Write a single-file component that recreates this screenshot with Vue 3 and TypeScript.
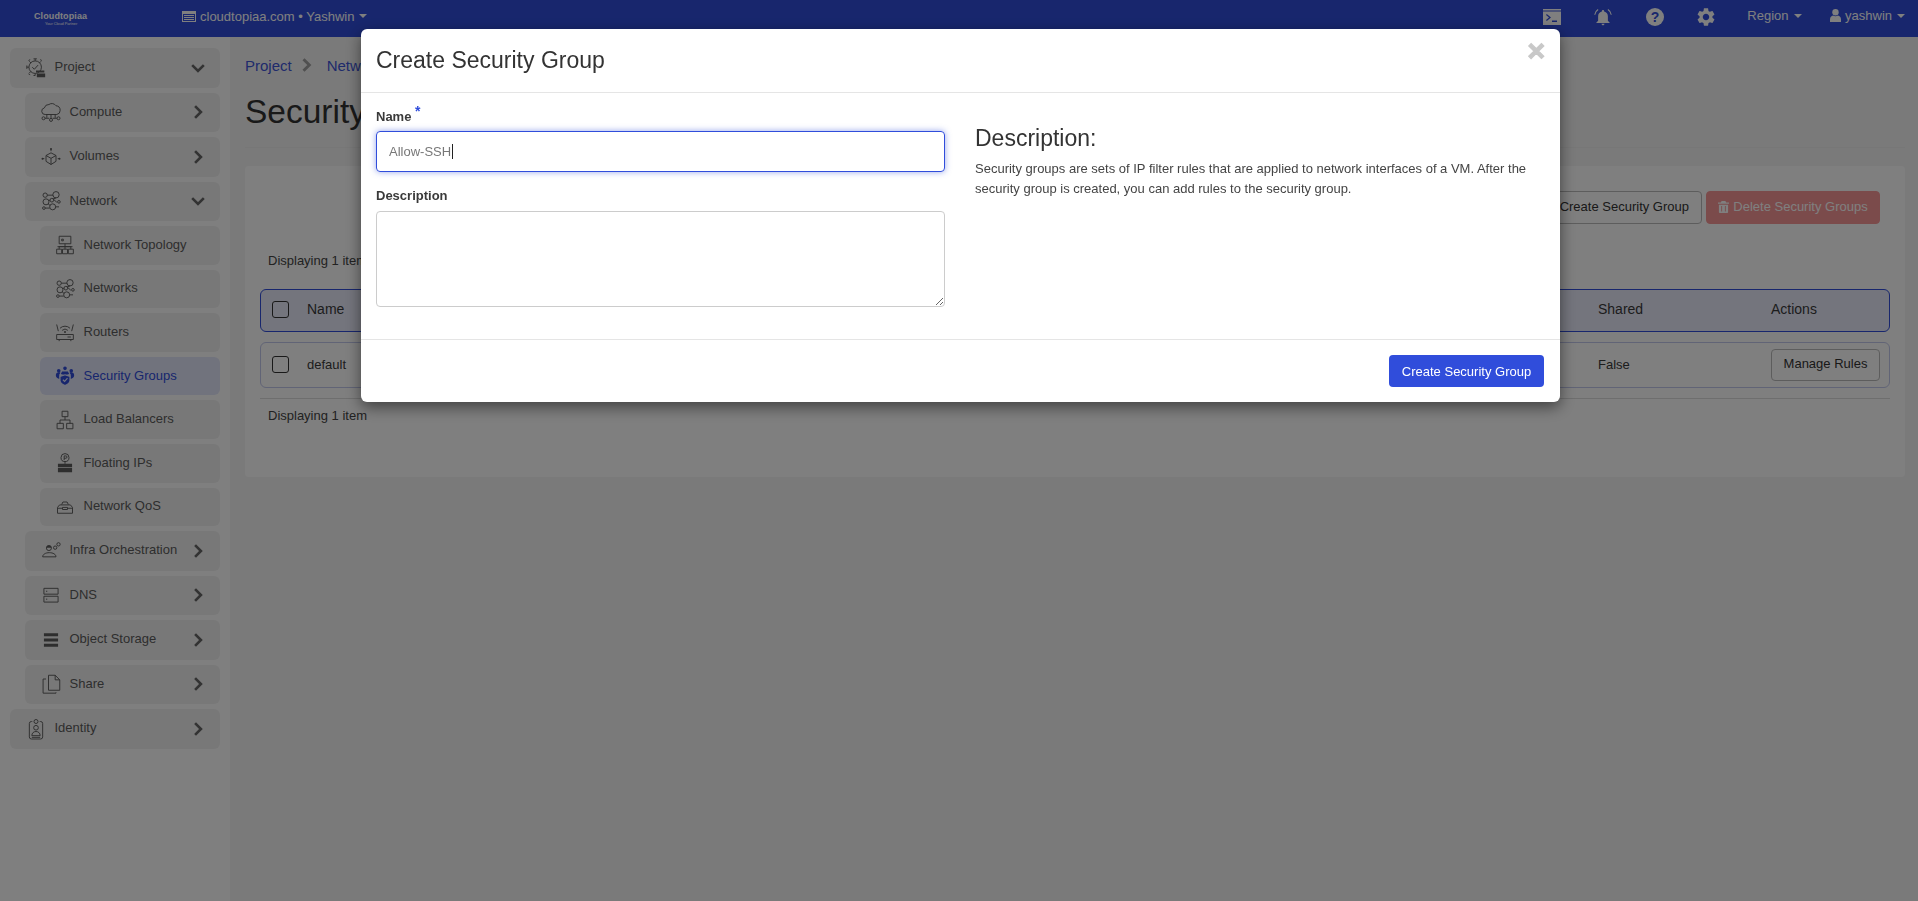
<script setup lang="ts">
const c = (x: number, y: number, r: number) =>
  `M${x - r} ${y}a${r} ${r} 0 1 0 ${2 * r} 0a${r} ${r} 0 1 0 ${-2 * r} 0z`

type Icon = { s?: string[]; f?: string[] }

const icons: Record<string, Icon> = {
  project: {
    f: ['M12 15h10v2.500H12zM13 18.500h10V23H13z'],
    s: [
      c(11, 11, 7.5),
      'M11 1v2.500M11 18.500V21M1 11h2.500M4 4l2 2M18 4l-2 2M4 18l2-2M9 1h4M9 21h2M1 9v4M3 3l2-1M19 3l-2-1M3 19l2 1',
      'M7.500 11l2.500 2.500 4.500-5'
    ]
  },
  compute: {
    s: [
      'M5 15a4 4 0 0 1-1-7.900A5.500 5.500 0 0 1 9.500 3a6 6 0 0 1 8.500 1.500A5.500 5.500 0 0 1 23 10a5 5 0 0 1-4 5z',
      c(3, 19.5, 1.8), c(12, 21.5, 1.8), c(21, 19.5, 1.8),
      'M4.800 19.500h5M14 19.500h5M12 15v4.700M7 15v4M17 15v4'
    ]
  },
  volumes: {
    s: ['M12 7l6 3.200v7L12 21l-6-3.800v-7zM6 10.200l6 3.400 6-3.400M12 13.600V21', 'M12 2v3M2 14h2M20 14h2'],
    f: [c(12, 2.5, 1.2), c(1.8, 14, 1.2), c(22.2, 14, 1.2)]
  },
  network: {
    s: [
      c(5, 5, 2.6), c(18, 4.5, 3.8), c(6, 13, 3.6), c(14, 19, 3.6), c(3.5, 20.5, 1.6), c(21.5, 13, 1.6),
      c(13, 11, 2.2),
      'M7.500 5h7M9 11.500l2-.5M15 10l4 3.500M8.600 15.500l2.500 2M5 20.500h5.400M17.600 19h4M18 8.300l-3.500 1.200'
    ]
  },
  topology: {
    s: ['M5 1.500h14v9H5zM2 17h6v5.500H2zM9 17h6v5.500H9zM16 17h6v5.500h-6zM12 10.500V17M5 17v-3h14v3M3 14h18', 'M8 5h2v2H8z']
  },
  router: {
    s: [
      'M2 15h20v6H2zM5 21v2M19 21v2M15 18h4',
      'M6 7.500a8.500 8.500 0 0 1 12 0M8.600 10a5 5 0 0 1 6.800 0M2 3l2 8M22 3l-2 8'
    ],
    f: [c(12, 12, 1.2)]
  },
  security: {
    f: [
      c(12, 2.8, 2.2), c(4.5, 5.8, 2.2), c(19.5, 5.8, 2.2),
      'M8.500 6.500h7l1.500 3-5 1.500-5-1.500zM1 11c0-2 1.500-3.500 3.500-3.500 1 0 1.500.2 2 .6L5 10.500 5.500 15.500C3 15 1 13.500 1 11zM23 11c0-2-1.500-3.500-3.500-3.500-1 0-1.500.2-2 .6l1.500 2.400-.5 5c2.500-.5 4.500-2 4.500-4.500z',
      'M12 10.500l6 2v5c0 3-3 5-6 6-3-1-6-3-6-6v-5z'
    ],
    s: ['M12 10.500l6 2v5c0 3-3 5-6 6-3-1-6-3-6-6v-5z', 'M9.500 16.500l2 2 3.500-4']
  },
  load: {
    s: ['M8.500 1.500h7v6.500h-7zM2.500 16h7.500v6.500H2.500zM14 16h7.500v6.500H14zM12 8v4M6 16v-4h12v4']
  },
  floating: {
    s: [c(12, 5.5, 4.8), 'M11 8.500V3.500h2a1.300 1.300 0 0 1 0 2.800h-2', 'M12 10.500V13'],
    f: ['M3.500 13h17v4h-17zM3.500 18h17v5h-17z']
  },
  qos: {
    s: ['M3 19.500v-7l2.500-3h13l2.500 3v7zM3 13.500h6M15 13.500h6M9 12.500h6v2.500H9zM8 9l1.500-3h5l1.500 3']
  },
  infra: {
    s: ['M2 19c0-3 3.500-5 8-5s8 2 8 5z', c(9.5, 8.5, 3), c(17, 8, 2), c(21, 4, 2)],
    f: ['M6.500 8a3 3 0 0 1 6 0z']
  },
  dns: {
    s: ['M3.500 4h17v7h-17zM3.500 13.500h17v7h-17z', 'M6 7.500h1.500M6 17h1.500']
  },
  storage: {
    f: ['M3.500 4h17v3.500h-17zM3.500 10.200h17v3.500h-17zM3.500 16.500h17V20h-17z']
  },
  share: {
    s: ['M9 1.500h8l5.500 5.500v12.500H9zM17 1.500V7h5.500', 'M6 6H2.500v17H18v-1']
  },
  identity: {
    s: [
      'M7.500 3H6.500A2.500 2.500 0 0 0 4 5.500v16A2.500 2.500 0 0 0 6.500 24h11a2.500 2.500 0 0 0 2.500-2.500v-16A2.500 2.500 0 0 0 17.500 3H16.500',
      c(12, 3, 2.4), c(12, 10.5, 2.8),
      'M7 20c0-3 2-5 5-5s5 2 5 5zM7 22h10'
    ]
  }
}

type Item = { label: string; icon: string; level: number; open?: boolean; leaf?: boolean; active?: boolean }

const menu: Item[] = [
  { label: 'Project', icon: 'project', level: 0, open: true },
  { label: 'Compute', icon: 'compute', level: 1 },
  { label: 'Volumes', icon: 'volumes', level: 1 },
  { label: 'Network', icon: 'network', level: 1, open: true },
  { label: 'Network Topology', icon: 'topology', level: 2, leaf: true },
  { label: 'Networks', icon: 'network', level: 2, leaf: true },
  { label: 'Routers', icon: 'router', level: 2, leaf: true },
  { label: 'Security Groups', icon: 'security', level: 2, leaf: true, active: true },
  { label: 'Load Balancers', icon: 'load', level: 2, leaf: true },
  { label: 'Floating IPs', icon: 'floating', level: 2, leaf: true },
  { label: 'Network QoS', icon: 'qos', level: 2, leaf: true },
  { label: 'Infra Orchestration', icon: 'infra', level: 1 },
  { label: 'DNS', icon: 'dns', level: 1 },
  { label: 'Object Storage', icon: 'storage', level: 1 },
  { label: 'Share', icon: 'share', level: 1 },
  { label: 'Identity', icon: 'identity', level: 0 }
]
</script>

<template>
  <div class="page">
    <header class="topbar">
      <div class="brand">
        <div class="brand-name">Cloudtopiaa</div>
        <div class="brand-tag">Your Cloud Partner</div>
      </div>
      <div class="tenant">
        <svg class="tenant-icon" viewBox="0 0 14 11">
          <path fill="currentColor" fill-rule="evenodd" d="M0 0h14v11H0zM1 3v7h12V3zM2 4h10v1H2zM2 6h10v1H2zM2 8h10v1H2z" />
        </svg>
        <span>cloudtopiaa.com • Yashwin</span>
        <i class="caret"></i>
      </div>
      <div class="top-right">
        <svg class="top-icon" viewBox="0 0 18 16">
          <path fill="currentColor" fill-rule="evenodd" d="M0 0h18v1.500H0zM0 2.500h18V16H0zM3 6l3 2.500L3 11l.8 1L8 8.500 3.800 5zM9 11.500v1.500h5v-1.500z" />
        </svg>
        <svg class="top-icon" viewBox="0 0 24 24">
          <path fill="currentColor" d="M12 23c1.100 0 2-.9 2-2h-4c0 1.100.9 2 2 2zm6.500-6v-6c0-3.070-1.630-5.640-5-6.320V4c0-.83-.67-1.500-1.500-1.500s-1.500.67-1.500 1.500v.68C7.140 5.360 5.500 7.920 5.500 11v6l-2.500 2.500v.5h18v-.5z" />
          <path fill="none" stroke="currentColor" stroke-width="1.500" d="M5.500 2C3 3.500 1.500 6 1 9M18.500 2c2.500 1.500 4 4 4.500 7" />
        </svg>
        <svg class="top-icon" viewBox="0 0 18 18">
          <circle cx="9" cy="9" r="9" fill="currentColor" />
          <text x="9" y="14" text-anchor="middle" class="help-mark">?</text>
        </svg>
        <svg class="top-icon" viewBox="2 2 20 20">
          <path fill="currentColor" fill-rule="evenodd" d="M19.140 12.940c.04-.3.06-.61.06-.94 0-.32-.02-.64-.07-.94l2.030-1.580c.18-.14.23-.41.12-.61l-1.920-3.320c-.12-.22-.37-.29-.59-.22l-2.390.96c-.5-.38-1.030-.7-1.620-.94l-.36-2.540c-.04-.24-.24-.41-.48-.41h-3.840c-.24 0-.43.17-.47.41l-.36 2.540c-.59.24-1.130.57-1.620.94l-2.390-.96c-.22-.08-.47 0-.59.22L2.740 8.870c-.12.21-.08.47.12.61l2.030 1.580c-.05.3-.09.63-.09.94s.02.64.07.94l-2.030 1.580c-.18.14-.23.41-.12.61l1.920 3.320c.12.22.37.29.59.22l2.390-.96c.5.38 1.030.7 1.620.94l.36 2.540c.05.24.24.41.48.41h3.840c.24 0 .44-.17.47-.41l.36-2.540c.59-.24 1.130-.56 1.620-.94l2.390.96c.22.08.47 0 .59-.22l1.920-3.320c.12-.22.07-.47-.12-.61l-2.010-1.580zM12 15.600c-1.980 0-3.600-1.620-3.600-3.600s1.620-3.600 3.600-3.600 3.600 1.620 3.600 3.600-1.620 3.600-3.600 3.600z" />
        </svg>
        <div class="top-menu region"><span>Region</span><i class="caret"></i></div>
        <div class="top-menu user">
          <svg class="user-icon" viewBox="0 0 11 13">
            <circle cx="5.500" cy="3.200" r="3.200" fill="currentColor" />
            <path fill="currentColor" d="M0 13v-2.500C0 8 1.500 6.800 3 6.500c1.500 1 3.500 1 5 0 1.500.3 3 1.500 3 4V13z" />
          </svg>
          <span>yashwin</span><i class="caret"></i>
        </div>
      </div>
    </header>

    <div class="shell">
      <aside class="sidebar">
        <div
          v-for="item in menu"
          :key="item.label"
          class="nav-item"
          :class="[`level-${item.level}`, { active: item.active }]"
        >
          <svg class="nav-icon" viewBox="0 0 24 24">
            <path v-for="d in icons[item.icon].f || []" :key="d" :d="d" class="ico-fill" />
            <path v-for="d in icons[item.icon].s || []" :key="d" :d="d" class="ico-stroke" />
          </svg>
          <span class="nav-label">{{ item.label }}</span>
          <svg v-if="!item.leaf" class="chev" viewBox="0 0 24 24">
            <path :d="item.open ? 'M2 7l10 10 10-10' : 'M7 2l10 10-10 10'" />
          </svg>
        </div>
      </aside>

      <main class="main">
        <nav class="crumbs">
          <a>Project</a>
          <svg class="crumb-chev" viewBox="0 0 24 24"><path d="M6 2l10 10-10 10" /></svg>
          <a>Network</a>
        </nav>
        <div class="page-title"><h1>Security Groups</h1></div>

        <section class="card">
          <div class="toolbar">
            <button class="btn create">Create Security Group</button>
            <button class="btn danger">
              <svg class="trash" viewBox="0 0 12 13">
                <path fill="currentColor" fill-rule="evenodd" d="M4 0h4l1 1.500h3v1.500H0V1.500h3zM1 4h10v8a1 1 0 0 1-1 1H2a1 1 0 0 1-1-1zM3.500 5.500v6h1v-6zM7.500 5.500v6h1v-6z" />
              </svg>
              Delete Security Groups
            </button>
          </div>
          <p class="count first">Displaying 1 item</p>
          <div class="row head">
            <span class="check"></span><span>Name</span><span>Shared</span><span>Actions</span>
          </div>
          <div class="row body-row">
            <span class="check"></span><span>default</span><span>False</span>
            <span><button class="btn small">Manage Rules</button></span>
          </div>
          <div class="tail"><p class="count">Displaying 1 item</p></div>
        </section>
      </main>
    </div>

    <div class="backdrop"></div>

    <div class="modal">
      <div class="modal-head">
        <h2>Create Security Group</h2>
        <span class="close">×</span>
      </div>
      <div class="modal-body">
        <form class="form-col">
          <label class="field-label">Name <sup class="req">*</sup></label>
          <div class="input-focus">Allow-SSH<span class="cursor"></span></div>
          <label class="field-label second">Description</label>
          <textarea class="area"></textarea>
        </form>
        <div class="help-col">
          <h3>Description:</h3>
          <p>Security groups are sets of IP filter rules that are applied to network interfaces of a VM. After the security group is created, you can add rules to the security group.</p>
        </div>
      </div>
      <div class="modal-foot">
        <button class="btn-primary">Create Security Group</button>
      </div>
    </div>
  </div>
</template>

<style>
html, body { margin: 0; padding: 0; overflow: hidden; }
</style>

<style scoped>
* { box-sizing: border-box; }
.page {
  width: 1918px;
  height: 901px;
  overflow: hidden;
  background: #f5f5f5;
  font-family: "Liberation Sans", Arial, sans-serif;
  font-size: 13px;
  color: #3a3a3a;
}
.topbar {
  height: 37px;
  display: flex;
  align-items: center;
  background: #304ddb;
  color: #fff;
  padding-left: 34px;
  padding-right: 13px;
}
.brand { width: 148px; text-align: left; }
.brand-name { font-size: 9px; font-weight: 700; line-height: 11px; letter-spacing: .1px; }
.brand-tag { font-size: 3.8px; line-height: 5px; padding-left: 11px; }
.tenant { display: flex; align-items: center; margin-top: -5px; }
.tenant-icon { width: 14px; height: 11px; margin-right: 4px; }
.caret {
  display: inline-block;
  width: 0;
  height: 0;
  border-left: 4px solid transparent;
  border-right: 4px solid transparent;
  border-top: 4px solid currentColor;
  margin-left: 5px;
}
.top-right { margin-left: auto; display: flex; align-items: center; margin-top: -3px; }
.top-icon { width: 18px; height: 18px; margin-right: 33.300px; }
.help-mark { font: 700 14px "Liberation Sans", Arial, sans-serif; fill: #304ddb; }
.top-menu { display: flex; align-items: center; padding-bottom: 3px; }
.region { margin-left: -1px; margin-right: 28.500px; }
.user-icon { width: 11px; height: 13px; margin-right: 4px; }

.shell { display: flex; height: 864px; }
.sidebar {
  width: 230px;
  flex: none;
  background: #fff;
  padding: 11px 10px 0;
  display: flex;
  flex-direction: column;
  gap: 5px;
}
.nav-item {
  height: 39.500px;
  display: flex;
  align-items: center;
  background: #f1f1f1;
  border-radius: 6px;
  padding: 0 15px 0 16px;
  color: #5c5c5c;
}
.level-1 { margin-left: 15px; }
.level-2 { margin-left: 30px; height: 38.600px; padding-left: 15px; }
.nav-item.active { background: #e3e6fb; color: #304ddb; }
.nav-icon { width: 20px; height: 20px; flex: none; margin-right: 8.500px; overflow: visible; }
.ico-stroke { fill: none; stroke: currentColor; stroke-width: 1.150; }
.ico-fill { fill: currentColor; stroke: none; }
.active .ico-stroke { stroke: #e3e6fb; stroke-width: 1.400; }
.nav-label { flex: 1; margin-top: -2px; white-space: nowrap; }
.chev { width: 14px; height: 14px; flex: none; fill: none; stroke: #666; stroke-width: 4.500; }

.main { flex: 1; padding: 17px 13px 0 15px; min-width: 0; }
.crumbs { display: flex; align-items: center; height: 22px; font-size: 15px; color: #3f56d8; }
.crumb-chev { width: 14px; height: 14px; margin: 0 13px 0 8px; fill: none; stroke: #a0a0a0; stroke-width: 5; }
.page-title { margin-top: 16px; padding-bottom: 15px; border-bottom: 1px solid #eee; margin-bottom: 18px; }
.page-title h1 { margin: 0; font-size: 33.500px; font-weight: 400; line-height: 40px; color: #333; }
.card { background: #fff; border-radius: 4px; padding: 25px 15px 51px; height: 311px; }
.toolbar { display: flex; justify-content: flex-end; gap: 4px; margin-right: 10px; }
.btn {
  height: 33px;
  padding: 0 13px 2px;
  background: #fff;
  border: 1px solid #bbb;
  border-radius: 4px;
  font: inherit;
  color: #333;
}
.btn.create { padding: 0 12px 2px 14px; }
.btn.danger {
  width: 174px;
  padding: 0 0 2px;
  background: #f69797;
  border-color: #f69797;
  color: #fff;
  display: flex;
  align-items: center;
  justify-content: center;
  gap: 4px;
}
.trash { width: 11px; height: 12px; }
.btn.small { height: 32px; width: 109px; padding: 0 0 2px; }
.count { margin: 0; line-height: 20px; padding-left: 8px; color: #444; }
.count.first { margin-top: 27px; margin-bottom: 18px; }
.row {
  display: grid;
  grid-template-columns: 46px 1fr 173px 118px;
  align-items: center;
  border-radius: 6px;
}
.row.head { height: 43px; background: #e9ebfa; border: 1px solid #304ddb; padding-bottom: 2.500px; margin-bottom: 10px; font-size: 14px; }
.row.body-row { height: 46px; border: 1px solid #c2c8ec; padding-bottom: 1px; }
.check { width: 17px; height: 17px; margin-left: 11px; border: 1.500px solid #333; border-radius: 3px; }
.tail { margin-top: 10px; border-top: 1px solid #ddd; padding-top: 7px; }

.backdrop { position: fixed; inset: 0; background: rgba(0, 0, 0, .5); }
.modal {
  position: fixed;
  left: 361px;
  top: 29px;
  width: 1199px;
  height: 373px;
  background: #fff;
  border-radius: 6px;
  box-shadow: 0 5px 15px rgba(0, 0, 0, .5);
  display: flex;
  flex-direction: column;
  color: #333;
}
.modal-head {
  height: 64px;
  flex: none;
  padding: 0 16px 0 15px;
  display: flex;
  align-items: center;
  justify-content: space-between;
  border-bottom: 1px solid #e5e5e5;
}
.modal-head h2 { margin: 0; font-size: 23px; font-weight: 400; color: #333; }
.close {
  font-size: 30px;
  font-weight: 700;
  color: #c8c8c8;
  line-height: 1;
  margin: -19px -1px 0 0;
  -webkit-text-stroke: 1.200px #c8c8c8;
}
.modal-body { height: 247px; flex: none; display: flex; padding: 14px 16px 0 15px; gap: 30px; border-bottom: 1px solid #e5e5e5; }
.form-col { width: 569px; flex: none; display: flex; flex-direction: column; }
.field-label { font-weight: 700; font-size: 13px; line-height: 20px; color: #3a3a3a; }
.field-label.second { margin-top: 14px; }
.req { color: #304ddb; font-size: 14px; line-height: 0; }
.input-focus {
  height: 41px;
  margin-top: 4px;
  border: 1.500px solid #304ddb;
  border-radius: 4px;
  box-shadow: 0 0 6px rgba(48, 77, 219, .5);
  display: flex;
  align-items: center;
  padding-left: 12px;
  color: #777;
  font-size: 13px;
}
.cursor { display: inline-block; width: 1px; height: 15px; background: #222; margin-left: 1px; }
.area {
  display: block;
  width: 100%;
  height: 96px;
  margin-top: 5px;
  border: 1px solid #ccc;
  border-radius: 4px;
  background: #fff;
  outline: none;
}
.help-col { flex: 1; padding-top: 18px; }
.help-col h3 { margin: 0; font-size: 23px; font-weight: 400; line-height: 26px; color: #333; }
.help-col p { margin: 8px 0 0; font-size: 13px; line-height: 19.500px; color: #444; }
.modal-foot { flex: 1; display: flex; align-items: flex-start; justify-content: flex-end; padding: 15px 16px 0; }
.btn-primary {
  width: 155px;
  height: 32px;
  background: #304ddb;
  border: none;
  border-radius: 4px;
  color: #fff;
  font: inherit;
  font-size: 13px;
  padding: 0;
}
</style>
